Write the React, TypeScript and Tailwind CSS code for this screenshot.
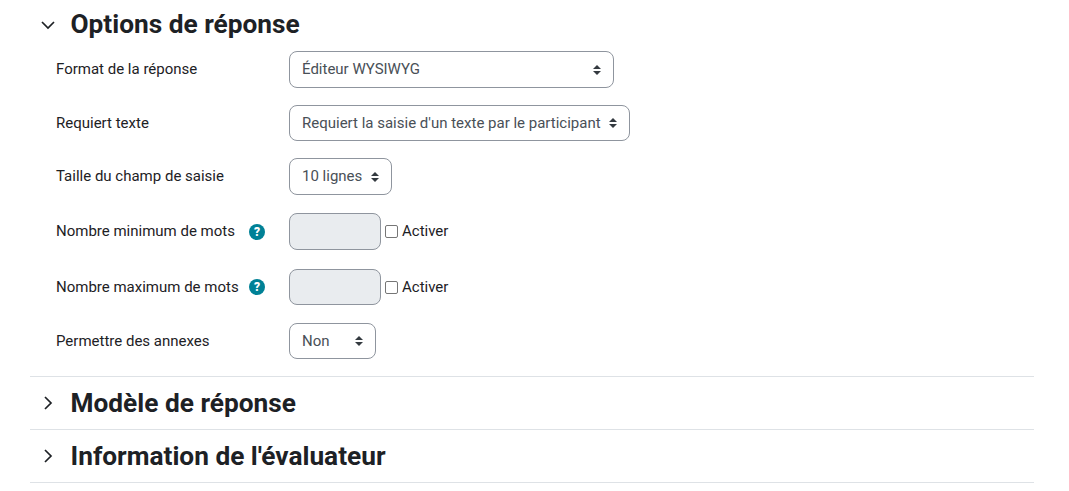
import React from "react";

function Arrows() {
  return (
    <svg width="10" height="12" viewBox="0 0 10 12" className="block shrink-0">
      <path d="M5 1 L9 5 H1 Z M5 11 L1 7 H9 Z" fill="#343a40" />
    </svg>
  );
}

function Chevron({ open }: { open: boolean }) {
  return (
    <svg width="16" height="16" viewBox="0 0 16 16" className="block" fill="none" stroke="#1d2125" strokeWidth="1.7">
      {open ? <path d="M2 5 L8 11 L14 5" /> : <path d="M5 2 L11 8 L5 14" />}
    </svg>
  );
}

function Select({ w, text, h }: { w: string; text: string; h: string }) {
  return (
    <div className={`${w} ${h} flex items-center justify-between pl-3 pr-[11px] border border-[#8f959e] rounded-lg bg-white text-[#495057]`}>
      <span className="whitespace-nowrap">{text}</span>
      <Arrows />
    </div>
  );
}

function Help() {
  return (
    <span className="w-4 h-4 rounded-full bg-[#008196] text-white text-[12px] font-black leading-4 text-center">?</span>
  );
}

function Row({ label, help, gap, children }: { label: string; help?: boolean; gap: string; children: React.ReactNode }) {
  return (
    <div className={`flex items-center ${gap}`}>
      <div className="w-[233px] flex items-center text-[#1d2125]">
        <span className="whitespace-nowrap w-[193px]">{label}</span>
        {help && <Help />}
      </div>
      {children}
    </div>
  );
}

function Disabled({ h }: { h: string }) {
  return (
    <div className="flex items-center">
      <div className={`w-[92px] ${h} border border-[#8f959e] rounded-lg bg-[#e9ecef]`} />
      <span className="ml-1 w-[13px] h-[13px] border border-[#767676] rounded-[2px] bg-white" />
      <span className="ml-1 text-[#1d2125]">Activer</span>
    </div>
  );
}

function Section({ title }: { title: string }) {
  return (
    <div className="h-[53px] flex items-center border-t border-[#dee2e6]">
      <div className="w-[40.5px] pl-[10px]"><Chevron open={false} /></div>
      <h3 className="text-[26.25px] font-bold text-[#1d2125] leading-none">{title}</h3>
    </div>
  );
}

export default function App() {
  return (
    <div className="w-[1069px] h-[491px] overflow-hidden bg-white pl-[30px] pr-[35px] pt-[11px] text-[15px] font-['Roboto',sans-serif]">
      <div className="flex items-center h-[27px]">
        <div className="w-[40.5px] pl-[10px]"><Chevron open /></div>
        <h3 className="text-[26.25px] font-bold text-[#1d2125] leading-none">Options de réponse</h3>
      </div>
      <div className="pl-[26px] pt-[13px]">
        <Row label="Format de la réponse" gap="mb-[17px]"><Select h="h-[37px]" w="w-[325px]" text="Éditeur WYSIWYG" /></Row>
        <Row label="Requiert texte" gap="mb-[17px]"><Select h="h-[36px]" w="w-[341px]" text="Requiert la saisie d'un texte par le participant" /></Row>
        <Row label="Taille du champ de saisie" gap="mb-[18px]"><Select h="h-[37px]" w="w-[103px]" text="10 lignes" /></Row>
        <Row label="Nombre minimum de mots" help gap="mb-[19px]"><Disabled h="h-[37px]" /></Row>
        <Row label="Nombre maximum de mots" help gap="mb-[18px]"><Disabled h="h-[36px]" /></Row>
        <Row label="Permettre des annexes" gap="mb-[17px]"><Select h="h-[36px]" w="w-[87px]" text="Non" /></Row>
      </div>
      <Section title="Modèle de réponse" />
      <Section title="Information de l'évaluateur" />
      <div className="border-t border-[#dee2e6]" />
    </div>
  );
}
